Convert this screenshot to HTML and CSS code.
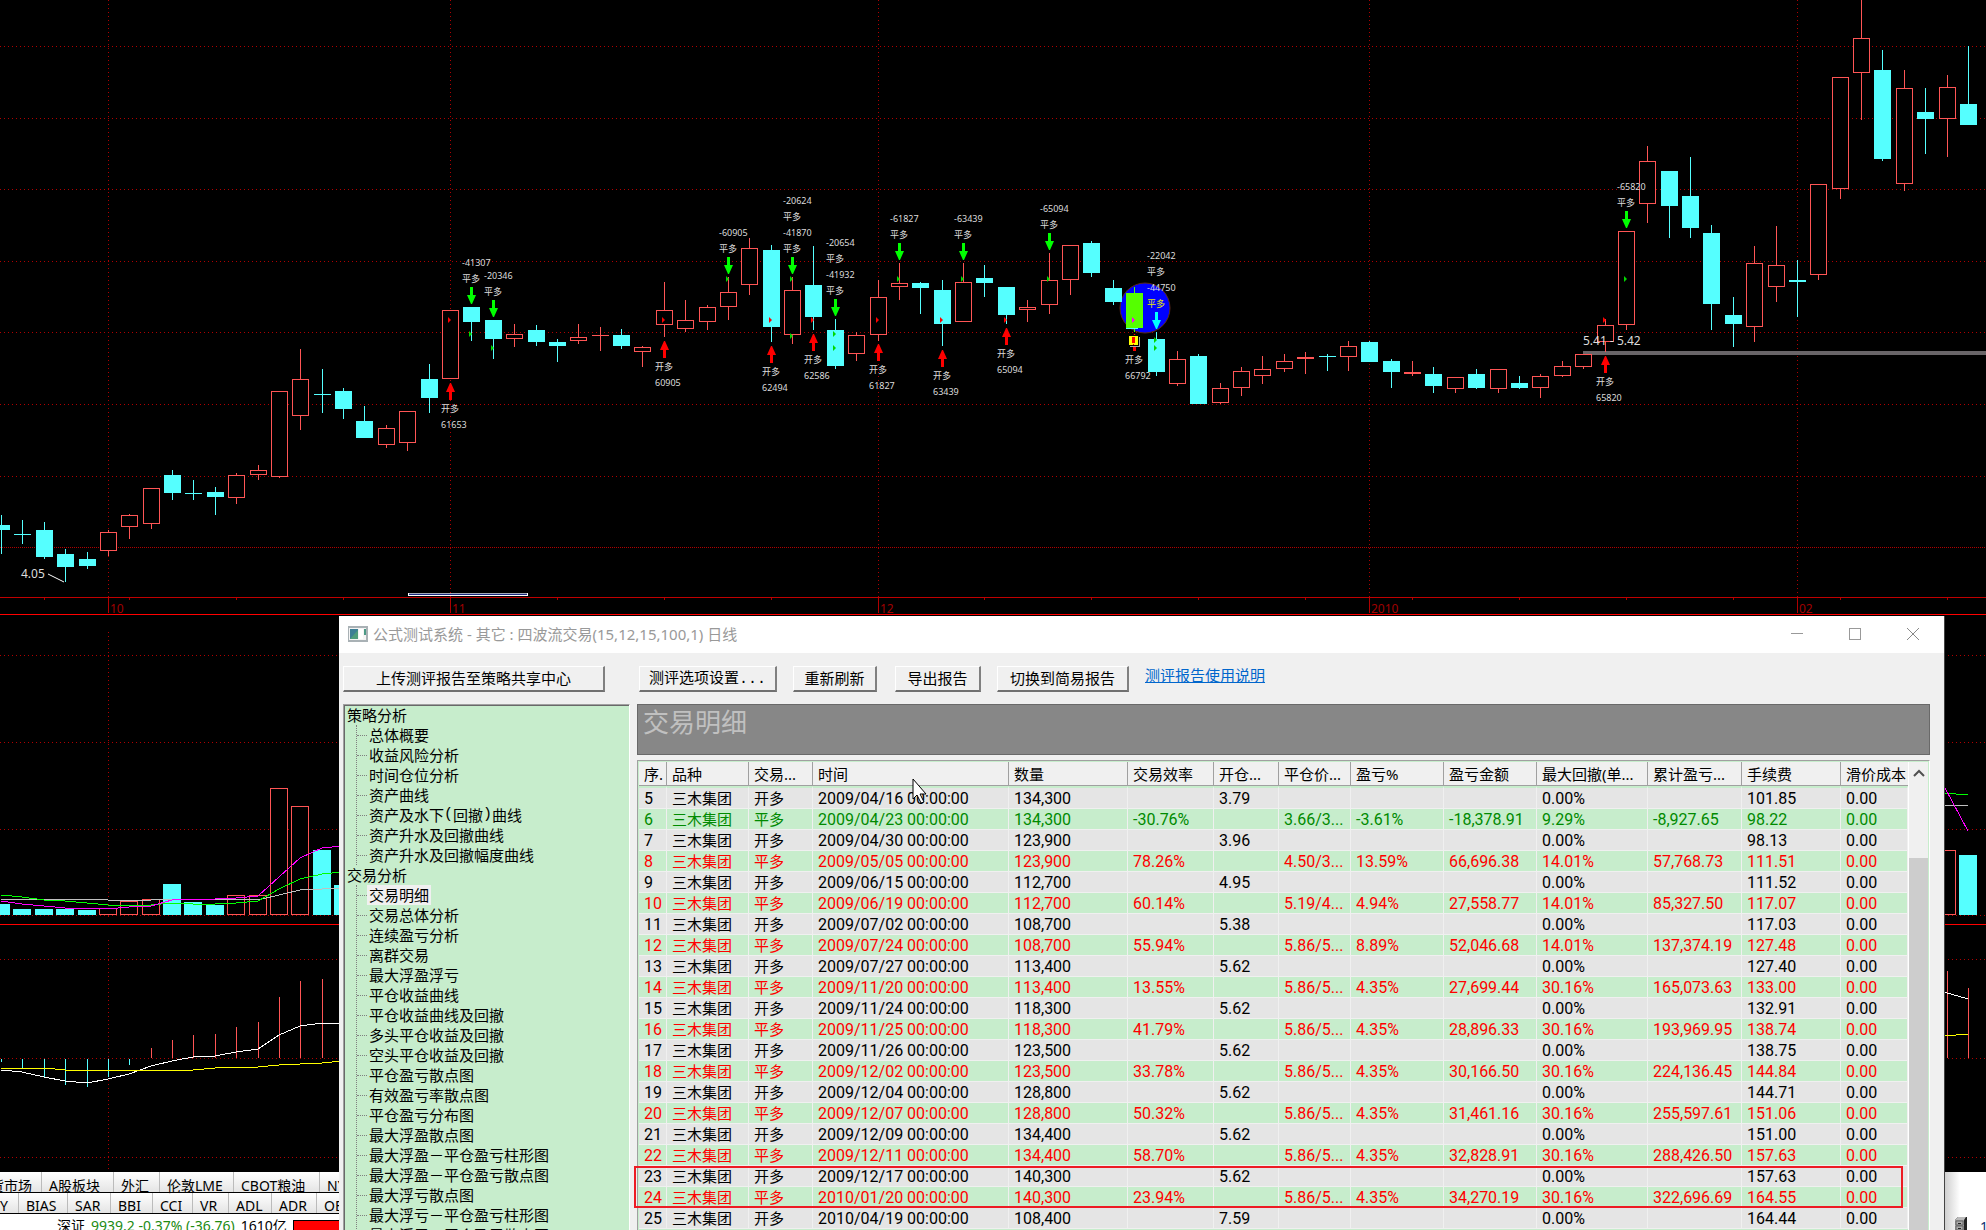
FILE: index.html
```html
<!DOCTYPE html>
<html lang="zh-CN">
<head>
<meta charset="utf-8">
<title>公式测试系统</title>
<link rel="stylesheet" href="styles.css">
</head>
<body>
<main class="charts">
  <svg class="pane pane-price" id="price" aria-label="日线"></svg>
  <svg class="pane pane-volume" id="volume" aria-label="成交量"></svg>
  <svg class="pane pane-macd" id="macd" aria-label="MACD"></svg>
</main>
<footer class="dock">
  <nav class="tabs tabs-market">
    <a href="#">货市场</a><a href="#">A股板块</a><a href="#">外汇</a><a href="#">伦敦LME</a><a href="#">CBOT粮油</a><a href="#">NYBOT</a>
  </nav>
  <nav class="tabs tabs-index">
    <a href="#">Y</a><a href="#">BIAS</a><a href="#">SAR</a><a href="#">BBI</a><a href="#">CCI</a><a href="#">VR</a><a href="#">ADL</a><a href="#">ADR</a><a href="#">OBV</a>
  </nav>
  <div class="status">
    <span>深证</span><span class="down">9939.2 -0.37% (-36.76)</span><span>1610亿</span><span class="meter"></span>
  </div>
  <div class="tray">
    <svg width="14" height="16" viewBox="0 0 14 16"><path d="M1 3l3-3h9v13l-2 3H1z" fill="#222"/><path d="M1 3l3-3h8l-2 3z" fill="#bbb"/><path d="M1 3h9v13H1z" fill="#999"/><path d="M2 4h7v4H2zM2 9h7v4H2z" fill="#aaa" stroke="#666"/><path d="M4 6h3v1H4zM4 11h3v1H4z" fill="#222"/></svg>
    <span class="tray-count">1</span>
  </div>
</footer>

<section class="dialog">
  <header class="titlebar">
    <svg width="20" height="16" viewBox="0 0 20 16"><rect x="0" y="0" width="20" height="16" fill="#a9b1b5"/><rect x="1" y="2" width="17" height="12" fill="#f4f4f4"/><rect x="2" y="3" width="8" height="10" fill="#3d7f95"/><path d="M2 13l8-9v9z" fill="#4f9d7c"/><rect x="11" y="3" width="4" height="10" fill="#fff"/><rect x="16" y="3" width="2" height="6" fill="#4c9a86"/></svg>
    <h1>公式测试系统 - 其它 : 四波流交易(15,12,15,100,1) 日线</h1>
    <div class="winbtns">
      <button type="button" aria-label="最小化"><svg width="12" height="12"><rect x="0" y="5" width="12" height="1" fill="#999"/></svg></button>
      <button type="button" aria-label="最大化"><svg width="12" height="12"><path d="M0 0h12v12H0zM1 1v10h10V1z" fill="#999" fill-rule="evenodd"/></svg></button>
      <button type="button" aria-label="关闭"><svg width="12" height="12"><path d="M0 0L12 12M12 0L0 12" stroke="#888"/></svg></button>
    </div>
  </header>
  <div class="body">
    <div class="toolbar">
      <button type="button" class="btn upload">上传测评报告至策略共享中心</button>
      <button type="button" class="btn options">测评选项设置<span class="wide-dots">...</span></button>
      <button type="button" class="btn refresh">重新刷新</button>
      <button type="button" class="btn export">导出报告</button>
      <button type="button" class="btn simple">切换到简易报告</button>
      <a class="help" href="#">测评报告使用说明</a>
    </div>
    <div class="split">
      <nav class="tree">
        <div class="root">策略分析</div>
        <ul>
          <li>总体概要</li><li>收益风险分析</li><li>时间仓位分析</li><li>资产曲线</li><li>资产及水下<span class="mono">(</span>回撤<span class="mono">)</span>曲线</li><li>资产升水及回撤曲线</li><li>资产升水及回撤幅度曲线</li>
        </ul>
        <div class="root">交易分析</div>
        <ul>
          <li><span class="selected">交易明细</span></li><li>交易总体分析</li><li>连续盈亏分析</li><li>离群交易</li><li>最大浮盈浮亏</li><li>平仓收益曲线</li><li>平仓收益曲线及回撤</li><li>多头平仓收益及回撤</li><li>空头平仓收益及回撤</li><li>平仓盈亏散点图</li><li>有效盈亏率散点图</li><li>平仓盈亏分布图</li><li>最大浮盈散点图</li><li>最大浮盈－平仓盈亏柱形图</li><li>最大浮盈－平仓盈亏散点图</li><li>最大浮亏散点图</li><li>最大浮亏－平仓盈亏柱形图</li><li>最大浮亏－平仓盈亏散点图</li>
        </ul>
      </nav>
      <div class="report">
        <h2 class="banner">交易明细</h2>
        <div class="list">
          <table>
            <colgroup><col class="c-no"><col class="c-name"><col class="c-side"><col class="c-time"><col class="c-qty"><col class="c-eff"><col class="c-open"><col class="c-close"><col class="c-pct"><col class="c-pl"><col class="c-dd"><col class="c-sum"><col class="c-fee"><col></colgroup>
            <thead><tr><th>序.</th><th>品种</th><th>交易...</th><th>时间</th><th>数量</th><th>交易效率</th><th>开仓...</th><th>平仓价...</th><th>盈亏%</th><th>盈亏金额</th><th>最大回撤(单...</th><th>累计盈亏...</th><th>手续费</th><th>滑价成本</th></tr></thead>
            <tbody id="trades"></tbody>
          </table>
          <div class="scrollbar">
            <svg class="scroll-up" width="12" height="8"><path d="M1 7l5-5 5 5" fill="none" stroke="#505050" stroke-width="2"/></svg>
            <div class="thumb"></div>
          </div>
        </div>
        <div class="marker"></div>
      </div>
    </div>
  </div>
  <svg class="cursor" width="16" height="26" viewBox="0 0 16 26"><path d="M1 1v20l4-4 4 8 3-1-4-8h6z" fill="#fff" stroke="#000"/></svg>
</section>
<script src="app.js"></script>
</body>
</html>
```
FILE: styles.css
```css
* { box-sizing: border-box; }
html, body { height: 100%; }
body {
  margin: 0;
  display: flex;
  flex-direction: column;
  overflow: hidden;
  position: relative;
  background: #000;
  color: #000;
  font: 15px/20px "Noto Sans", "Noto Sans CJK SC", sans-serif;
}
button { font: inherit; color: inherit; }
h1, h2, ul { margin: 0; padding: 0; font-weight: 400; }
ul { list-style: none; }

/* chart panes */
.charts { flex: 1; min-height: 0; overflow: hidden; }
.pane { display: block; width: 100%; }
.pane-price { height: 615px; border-bottom: 1px solid #f00; }
.pane-volume { height: 310px; border-bottom: 1px solid #f00; }
.pane-macd { height: 247px; }
.pane-price text { font-size: 9px; fill: #dcdcdc; }
.pane-price .price { font-size: 12px; }
.pane-price .axis { font-size: 12px; fill: #a00000; }
.pane-price .lit { fill: #e8e800; }
polyline { fill: none; shape-rendering: crispEdges; }

/* bottom dock */
.dock { position: relative; height: 58px; background: #fff; font-size: 14px; }
.tabs { display: grid; height: 21px; background: linear-gradient(#fff, #e4e4e4); border-bottom: 1px solid #000; justify-content: start; }
.tabs a { color: #000; text-decoration: none; padding-left: 7px; line-height: 28px; height: 20px; border-right: 1px solid #bbb; white-space: nowrap; }
.tabs-market { grid-template-columns: 42px 72px 46px 74px 86px 100px; }
.tabs-market a:first-child { display: flex; justify-content: flex-end; padding: 0 9px 0 0; }
.tabs-index { grid-template-columns: 19px 49px 43px 42px 40px 36px 43px 45px 100px; }
.tabs-index a { line-height: 26px; }
.tabs-index a:first-child { padding-left: 0; }
.status { display: flex; gap: 6px; padding-left: 57px; line-height: 24px; white-space: nowrap; }
.status .down { color: #208a10; }
.meter { width: 60px; height: 16px; margin: 6px 0; background: #f00; border: 1px solid #000; }
.tray { position: absolute; right: 0; bottom: 0; width: 42px; height: 58px; padding: 45px 0 0 10px; display: flex; gap: 12px; overflow: hidden; background: linear-gradient(90deg, #ccc, #fff 16px); }
.tray svg { flex: none; }
.tray-count { color: #103070; line-height: 20px; }

/* report dialog */
.dialog { position: absolute; left: 339px; right: 41px; top: 616px; bottom: 0; overflow: hidden; display: flex; flex-direction: column; background: #f0f0f0; border-right: 1px solid #444; }
.titlebar { display: flex; align-items: center; height: 37px; flex: none; padding: 0 2px 1px 9px; background: #fff; }
.titlebar h1 { flex: 1; padding-left: 5px; font-size: 15px; line-height: 20px; color: #999; white-space: nowrap; }
.winbtns { display: flex; }
.winbtns button { width: 58px; height: 34px; border: 0; background: none; padding: 0; }
.winbtns svg { display: block; margin: 0 auto; overflow: visible; }
.body { flex: 1; min-height: 0; display: flex; flex-direction: column; padding: 13px 14px 0 4px; }
.toolbar { display: flex; flex: none; height: 38px; align-items: flex-start; }
.btn { height: 26px; padding: 0 0 2px; line-height: 20px; font-family: "Noto Sans CJK SC", sans-serif; background: #f0f0f0; border: 1px solid #fff; border-right: 2px solid #808080; border-bottom: 2px solid #707070; white-space: nowrap; }
.upload { width: 262px; margin-right: 34px; }
.options { width: 138px; margin-right: 16px; }
.refresh { width: 84px; margin-right: 18px; }
.export { width: 86px; margin-right: 16px; }
.simple { width: 132px; margin-right: 16px; }
.wide-dots, .mono { font-family: "Liberation Mono", monospace; }
.help { color: #06c; line-height: 18px; }
.split { flex: 1; min-height: 0; display: flex; gap: 7px; }
.tree { width: 287px; flex: none; overflow: hidden; background: #c7edcc; border: 1px solid #a0a0a0; border-right-color: #fff; border-bottom: 0; box-shadow: inset 1px 1px #696969; white-space: nowrap; font-family: "Noto Sans CJK SC", sans-serif; }
.tree .root { padding-left: 3px; }
.tree ul { margin-left: 12px; border-left: 1px dotted #808080; }
.tree li { display: flex; align-items: center; height: 20px; }
.tree li::before { content: ""; width: 10px; margin-right: 2px; border-top: 1px dotted #808080; }
.tree .selected { margin: 0 -2px; padding: 0 2px; background: #f0f0f0; }
.report { flex: 1; min-width: 0; display: flex; flex-direction: column; position: relative; }
.banner { flex: none; height: 51px; background: #878787; border: 1px solid #696969; padding-left: 5px; font: 26px/32px "Noto Sans CJK SC", sans-serif; color: #c0c0c0; }
.list { flex: 1; min-height: 0; margin-top: 5px; display: flex; overflow: hidden; align-items: stretch; border: 1px solid #a0a0a0; border-right-color: #fff; border-bottom: 0; padding: 1px 1px 0; background: #c7edcc; }
table { flex: 1; min-width: 0; border-collapse: separate; border-spacing: 0; table-layout: fixed; align-self: flex-start; }
.c-no { width: 28px; } .c-name { width: 82px; } .c-side { width: 64px; } .c-time { width: 196px; }
.c-qty { width: 119px; } .c-eff { width: 86px; } .c-open { width: 65px; } .c-close { width: 72px; }
.c-pct { width: 93px; } .c-pl { width: 93px; } .c-dd { width: 111px; } .c-sum { width: 94px; } .c-fee { width: 99px; }
th, td { text-align: left; font-weight: 400; white-space: nowrap; }
th { height: 24px; padding: 2px 0 0 5px; line-height: 21px; background: #f0f0f0; border-right: 1px solid #a0a0a0; border-bottom: 1px solid #a0a0a0; }
th:last-child { border-right: 0; }
td { height: 21px; padding: 2px 0 0 5px; line-height: 18px; border-right: 1px solid #f0f0f0; border-bottom: 1px solid #f0f0f0; background: #e5e5e5; font-family: "Roboto", "Noto Sans CJK SC", sans-serif; font-size: 16px; }
td:nth-child(2), td:nth-child(3) { font-size: 15px; }
tr.first td { height: 23px; border-top: 2px solid #c7edcc; }
tr.win td, tr.loss td { background: #c7edcc; }
tr.win { color: #f00; }
tr.loss { color: #008a00; }
.scrollbar { width: 20px; flex: none; display: flex; flex-direction: column; align-items: center; background: #f0f0f0; border-left: 1px solid #fff; }
.scroll-up { flex: none; margin: 7px 0 81px; }
.thumb { flex: 1; width: 100%; background: #cdcdcd; }
.marker { position: absolute; left: -3px; right: 27px; top: 462px; height: 42px; border: 2px solid #ed1c24; }
.cursor { position: absolute; left: 573px; top: 162px; }
```
FILE: app.js
```js
var NS = 'http://www.w3.org/2000/svg';
var RISE = '#ff5555', FALL = '#55ffff', GRID = '#b00000';

function add(parent, tag, attrs, text) {
  var el = document.createElementNS(NS, tag);
  for (var k in attrs) el.setAttribute(k, attrs[k]);
  if (text !== undefined) el.textContent = text;
  parent.appendChild(el);
  return el;
}
function rect(p, x, y, w, h, fill) { return add(p, 'rect', { x: x, y: y, width: w, height: h, fill: fill }); }
function barX(i) { return Math.floor(1.5 + 21.38 * i); }
function frame(p, x, y, w, h, color) {
  rect(p, x, y, w, h, color);
  if (h > 2) rect(p, x + 1, y + 1, w - 2, h - 2, '#000');
}
function dotted(svg, id, step) {
  var d = add(svg, 'defs', {});
  var h = add(d, 'pattern', { id: id + 'h', width: step, height: 1, patternUnits: 'userSpaceOnUse' });
  rect(h, 0, 0, 1, 1, GRID);
  var v = add(d, 'pattern', { id: id + 'v', width: 1, height: step, patternUnits: 'userSpaceOnUse' });
  rect(v, 0, 0, 1, 1, GRID);
}
function pane(id, top, rows) {
  var svg = document.getElementById(id);
  dotted(svg, id, 4);
  var g = add(svg, 'g', { transform: 'translate(0 ' + -top + ')' });
  rows.forEach(function (y) { rect(g, 0, y, 4000, 1, 'url(#' + id + 'h)'); });
  return g;
}

/* price pane: [rising, high, body top, body bottom, low] */
var candles = [
  [0,515,525,530,554],[0,520,534,534,544],[0,522,530,557,559],[0,549,554,567,582],[0,552,559,566,569],
  [1,530,532,551,556],[1,514,515,527,539],[1,488,488,524,529],[0,470,475,493,500],[0,480,493,493,500],
  [0,487,492,497,515],[1,473,475,498,504],[1,465,470,475,480],[1,391,391,477,478],[1,349,379,416,430],
  [0,369,394,394,413],[0,388,391,409,419],[0,406,421,438,438],[1,425,428,445,448],[1,411,411,443,451],
  [0,364,379,398,413],[1,310,310,379,379],[0,307,307,322,341],[0,320,320,339,359],[1,324,334,339,347],
  [0,325,330,342,346],[0,339,342,346,362],[1,324,337,341,344],[1,327,335,336,351],[0,329,335,346,349],
  [1,346,347,352,367],[1,282,310,325,337],[1,300,320,329,332],[1,305,307,322,330],[1,277,292,307,320],
  [1,238,248,285,295],[0,245,250,327,342],[1,277,290,335,344],[0,246,285,317,330],[0,319,330,366,369],
  [1,332,335,354,361],[1,280,297,335,341],[1,263,283,287,300],[0,282,283,288,314],[0,280,290,324,346],
  [1,263,282,322,322],[0,265,278,283,297],[0,287,287,315,324],[1,300,307,310,322],[1,253,280,305,314],
  [1,245,245,280,295],[0,241,243,273,277],[0,280,288,302,305],null,[0,332,339,372,376],
  [1,351,359,384,386],[0,354,356,404,404],[1,383,388,403,404],[1,367,371,388,396],[1,356,369,376,384],
  [1,354,361,369,372],[1,352,357,359,374],[0,354,356,357,371],[1,341,346,357,371],[0,341,342,362,362],
  [0,359,361,372,388],[1,361,372,374,376],[0,367,374,386,393],[1,377,377,389,393],[0,369,374,388,389],
  [1,369,369,389,393],[0,376,383,388,389],[1,374,376,388,398],[1,361,366,376,377],[1,354,354,367,369],
  [1,319,325,342,352],[1,231,231,325,330],[1,146,161,204,223],[0,171,171,206,238],[0,157,196,228,238],
  [0,225,233,304,330],[0,297,315,324,347],[1,246,263,327,342],[1,226,265,287,302],[0,260,280,282,317],
  [1,184,184,275,280],[1,77,77,189,199],[1,0,38,73,120],[0,50,70,159,161],[1,70,88,184,191],
  [0,88,112,119,154],[1,75,87,119,157],[0,46,104,125,125]
];
var months = [[5, '10'], [21, '11'], [41, '12'], [64, '2010'], [84, '02']];

var g = pane('price', 0, [46, 118, 189, 261, 332, 404, 476]);
dotted(document.getElementById('price'), 'fine', 2);
rect(g, 0, 547, 4000, 1, 'url(#fineh)');
months.forEach(function (m) {
  var x = barX(m[0]);
  rect(add(g, 'g', { transform: 'translate(' + x + ' 0)' }), 0, 0, 1, 597, 'url(#pricev)');
  rect(g, x, 597, 1, 16, GRID);
  add(g, 'text', { x: x + 2, y: 613, 'class': 'axis' }, m[1]);
});
rect(g, 0, 597, 4000, 1, '#c00000');
for (var t = 1; t < 93; t += 5) rect(g, barX(t + (t === 1 ? 1 : 0)), 598, 1, 2, GRID);
rect(g, 408, 593, 120, 3, '#fff');
rect(g, 409, 593, 118, 1, '#a0a8b8');
rect(g, 409, 594, 118, 1, '#1c2c80');

rect(g, 1583, 351, 3000, 4, '#696568');
add(g, 'circle', { cx: 1145, cy: 308, r: 25, fill: '#0000ff', stroke: '#5a2a1a' });
candles.forEach(function (c, i) {
  if (!c) return;
  var x = barX(i), color = c[0] ? RISE : FALL, h = Math.max(1, c[3] - c[2]);
  rect(g, x, c[1], 1, c[4] - c[1], color);
  if (c[0]) frame(g, x - 8, c[2], 17, h, color);
  else rect(g, x - 8, c[2], 17, h, color);
});
var hx = barX(53);
rect(g, hx, 287, 1, 45, '#55ff00');
rect(g, hx - 8, 326, 12, 3, FALL);
rect(g, hx - 8, 293, 17, 35, '#55ff00');

function arrow(x, y, down, color) {
  add(g, 'path', {
    fill: color,
    d: down ? 'M' + (x - 1) + ' ' + y + 'h3v8h3l-4 9h-1l-4-9h3z'
            : 'M' + (x - 1) + ' ' + (y + 17) + 'h3v-8h3l-4-9h-1l-4 9h3z'
  });
}
var sells = [[22,287,['-41307']],[23,300,['-20346']],[34,257,['-60905']],[37,257,['-41870','-20624']],
  [39,299,['-41932','-20654']],[42,243,['-61827']],[45,243,['-63439']],[49,233,['-65094']],
  [54,312,['-44750','-22042']],[76,211,['-65820']]];
sells.forEach(function (s) {
  var x = barX(s[0]);
  arrow(x, s[1], true, s[0] === 54 ? '#00ffff' : '#00ff00');
  s[2].forEach(function (n, k) {
    add(g, 'text', { x: x - 9, y: s[1] - 5 - 32 * k, 'class': s[0] === 54 && !k ? 'lit' : '' }, '平多');
    add(g, 'text', { x: x - 9, y: s[1] - 21 - 32 * k }, n);
  });
});
var buys = [[21,383,'61653'],[31,341,'60905'],[36,346,'62494'],[38,334,'62586'],[41,344,'61827'],
  [44,350,'63439'],[47,328,'65094'],[53,334,'66792'],[75,356,'65820']];
buys.forEach(function (b) {
  var x = barX(b[0]);
  arrow(x, b[1], false, '#ff0000');
  add(g, 'text', { x: x - 9, y: b[1] + 29 }, '开多');
  add(g, 'text', { x: x - 9, y: b[1] + 45 }, b[2]);
});
rect(g, 1130, 337, 10, 10, '#aaa');
rect(g, 1128, 335, 11, 11, '#000');
rect(g, 1129, 336, 9, 9, '#ffff00');
add(g, 'path', { d: 'M1132 337h3v6h-3zM1133 344h1v1h-1z', fill: '#ff0000' });

[[21,319,'r'],[22,333,'g'],[23,347,'g'],[31,319,'r'],[34,278,'g'],[36,319,'r'],[37,278,'g'],[37,335,'g'],
 [38,319,'r'],[39,333,'g'],[39,347,'g'],[41,319,'r'],[42,278,'g'],[44,319,'r'],[45,278,'g'],[47,319,'r'],
 [49,278,'g'],[53,319,'m'],[54,339,'g'],[54,347,'g'],[75,319,'r'],[76,278,'g']].forEach(function (a) {
  add(g, 'path', {
    d: 'M' + (barX(a[0]) - 2) + ' ' + (a[1] - 2) + 'l3 3-3 3z',
    fill: { r: '#ff0000', g: '#00d800', m: '#ff00ff' }[a[2]]
  });
});
add(g, 'text', { x: 1583, y: 345, 'class': 'price' }, '5.41 - 5.42');
add(g, 'text', { x: 21, y: 578, 'class': 'price' }, '4.05');
add(g, 'path', { d: 'M48 574l16 8', stroke: '#fff' });

/* volume pane */
function line(p, color, ys, tail) {
  add(p, 'polyline', { stroke: color, points: ys.map(function (y, i) { return barX(i) + ',' + y; }).join(' ') });
  add(p, 'polyline', { stroke: color, points: tail });
}
g = pane('volume', 615, [655, 742, 829, 915]);
rect(add(g, 'g', { transform: 'translate(108 0)' }), 0, 630, 1, 290, 'url(#volumev)');
[[0,904],[0,909],[0,909],[0,909],[0,910],[1,908],[1,901],[1,899],[0,884],[0,902],[0,905],[1,895],[1,895],
 [1,788],[1,806],[0,850],[0,885]].forEach(function (v, i) {
  if (v[0]) frame(g, barX(i) - 9, v[1], 18, 915 - v[1], RISE);
  else rect(g, barX(i) - 9, v[1], 18, 915 - v[1], FALL);
});
frame(g, 1938, 850, 18, 65, RISE);
rect(g, 1959, 855, 18, 60, FALL);
line(g, '#c0c0c0', [899,899,899,899,899,900,900,900,899,899,899,899,900,895,890,889,888], '1944,806 1968,805');
line(g, '#00ff00', [895,897,900,901,903,905,906,905,903,904,904,903,901,889,879,874,872], '1944,793 1968,795');
line(g, '#ff00ff', [901,904,906,908,908,909,907,906,900,899,899,898,896,877,858,848,846], '1944,786 1968,831');

/* MACD pane */
g = pane('macd', 925, [959, 1058, 1157]);
rect(add(g, 'g', { transform: 'translate(108 0)' }), 0, 940, 1, 230, 'url(#macdv)');
[1062,1068,1077,1085,1087,1077,1065].forEach(function (y, i) { rect(g, barX(i), 1059, 1, y - 1059, FALL); });
[1048,1040,1035,1034,1027,1022,997,981,979].forEach(function (y, i) { rect(g, barX(i + 7), y, 1, 1058 - y, RISE); });
rect(g, 1947, 971, 1, 87, RISE);
rect(g, 1968, 988, 1, 70, RISE);
line(g, '#ffffff', [1070,1072,1077,1081,1083,1079,1074,1066,1061,1057,1056,1052,1049,1035,1026,1023,1024], '1944,992 1968,999');
line(g, '#ffff00', [1068,1068,1068,1070,1070,1070,1070,1070,1070,1070,1068,1067,1067,1065,1064,1063,1061], '1944,1036 1968,1034');

/* trade list: time, quantity, efficiency, open, close, P/L %, P/L, drawdown, total, fee */
var trades = [
  '2009/04/16|134,300||3.79||||0.00%||101.85',
  '2009/04/23|134,300|-30.76%||3.66/3...|-3.61%|-18,378.91|9.29%|-8,927.65|98.22',
  '2009/04/30|123,900||3.96||||0.00%||98.13',
  '2009/05/05|123,900|78.26%||4.50/3...|13.59%|66,696.38|14.01%|57,768.73|111.51',
  '2009/06/15|112,700||4.95||||0.00%||111.52',
  '2009/06/19|112,700|60.14%||5.19/4...|4.94%|27,558.77|14.01%|85,327.50|117.07',
  '2009/07/02|108,700||5.38||||0.00%||117.03',
  '2009/07/24|108,700|55.94%||5.86/5...|8.89%|52,046.68|14.01%|137,374.19|127.48',
  '2009/07/27|113,400||5.62||||0.00%||127.40',
  '2009/11/20|113,400|13.55%||5.86/5...|4.35%|27,699.44|30.16%|165,073.63|133.00',
  '2009/11/24|118,300||5.62||||0.00%||132.91',
  '2009/11/25|118,300|41.79%||5.86/5...|4.35%|28,896.33|30.16%|193,969.95|138.74',
  '2009/11/26|123,500||5.62||||0.00%||138.75',
  '2009/12/02|123,500|33.78%||5.86/5...|4.35%|30,166.50|30.16%|224,136.45|144.84',
  '2009/12/04|128,800||5.62||||0.00%||144.71',
  '2009/12/07|128,800|50.32%||5.86/5...|4.35%|31,461.16|30.16%|255,597.61|151.06',
  '2009/12/09|134,400||5.62||||0.00%||151.00',
  '2009/12/11|134,400|58.70%||5.86/5...|4.35%|32,828.91|30.16%|288,426.50|157.63',
  '2009/12/17|140,300||5.62||||0.00%||157.63',
  '2010/01/20|140,300|23.94%||5.86/5...|4.35%|34,270.19|30.16%|322,696.69|164.55',
  '2010/04/19|108,400||7.59||||0.00%||164.44'
];
var body = document.getElementById('trades');
trades.forEach(function (row, k) {
  var f = row.split('|'), closing = k % 2 === 1;
  var cells = [k + 5, '三木集团', closing ? '平多' : '开多', f[0] + ' 00:00:00'].concat(f.slice(1), '0.00');
  var tr = body.insertRow();
  if (k === 0) tr.className = 'first';
  if (closing) tr.className = f[2][0] === '-' ? 'loss' : 'win';
  cells.forEach(function (c) { tr.insertCell().textContent = c; });
});
```
